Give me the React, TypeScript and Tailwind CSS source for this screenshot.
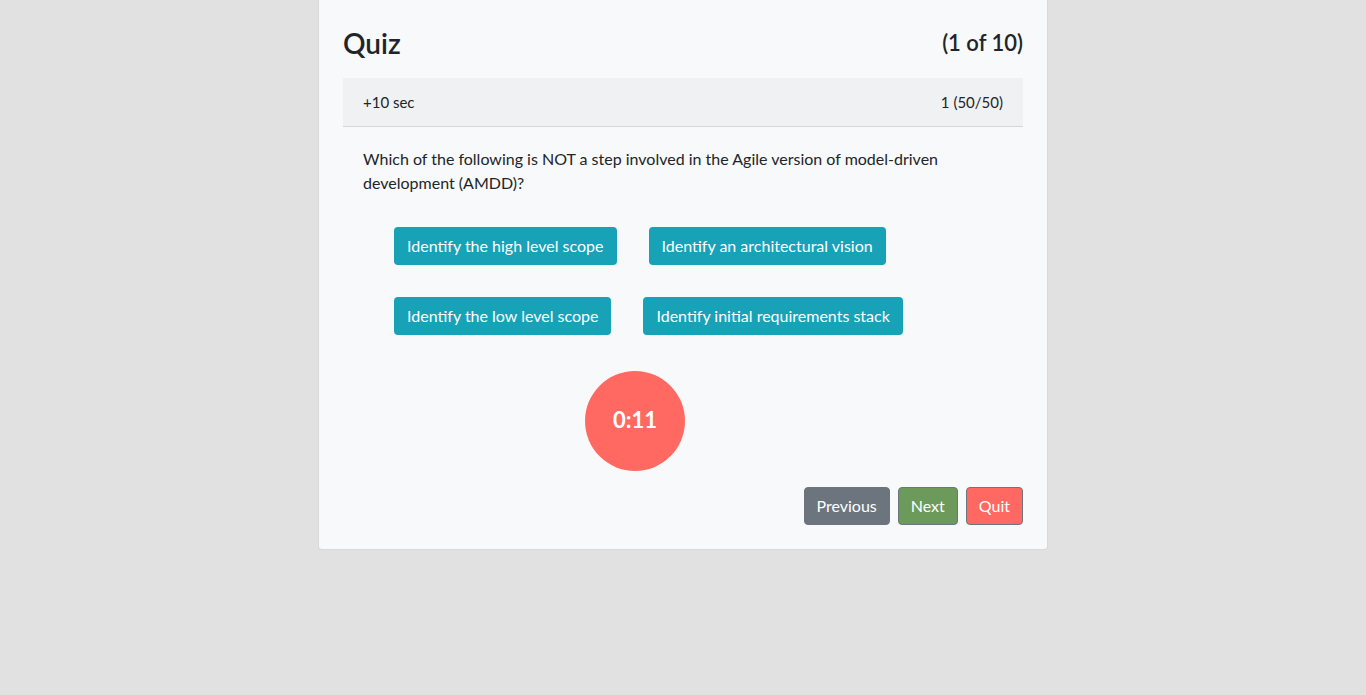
const answers = [
  ["Identify the high level scope", "Identify an architectural vision"],
  ["Identify the low level scope", "Identify initial requirements stack"],
];

export default function App() {
  return (
    <div className="min-h-screen bg-[#e1e1e1] font-['Segoe_UI',Lato,sans-serif] text-[#212529]">
      <div className="mx-auto w-[730px] bg-[#f8f9fa] border border-t-0 border-[#d9d9d9] rounded-b px-6 pt-6 pb-6">
        {/* Header */}
        <div className="flex items-center justify-between h-[38px]">
          <h1 className="text-[28px] font-semibold leading-none">Quiz</h1>
          <span className="text-[22px] font-semibold leading-none">(1 of 10)</span>
        </div>

        {/* Info bar */}
        <div className="mt-4 h-[49px] bg-[#f0f1f3] border-b border-[#d6d6d6] px-5 flex items-center justify-between text-[15px]">
          <span>+10 sec</span>
          <span>1 (50/50)</span>
        </div>

        {/* Question */}
        <div className="px-5 pt-5">
          <p className="text-base leading-6 w-[600px]">
            Which of the following is NOT a step involved in the Agile version of model-driven development (AMDD)?
          </p>
          <div className="ml-[31px] mt-[32px] flex flex-col gap-8">
            {answers.map((row, i) => (
              <div key={i} className="flex gap-8">
                {row.map((a) => (
                  <button
                    key={a}
                    className="h-[38px] px-[13px] rounded bg-[#17a2b8] text-white text-base leading-6"
                  >
                    {a}
                  </button>
                ))}
              </div>
            ))}
          </div>
          <div className="ml-[222px] mt-9 w-[100px] h-[100px] rounded-full bg-[#ff6961] flex items-center justify-center pb-1 text-white text-[22px] font-bold">
            0:11
          </div>
        </div>

        {/* Footer */}
        <div className="mt-4 flex justify-end gap-2">
          <button className="h-[38px] px-3 rounded bg-[#6c757d] border border-[#6c757d] text-white text-base">Previous</button>
          <button className="h-[38px] px-3 rounded bg-[#6b9a5b] border border-[#6c757d] text-white text-base">Next</button>
          <button className="h-[38px] px-3 rounded bg-[#ff6961] border border-[#6c757d] text-white text-base">Quit</button>
        </div>
      </div>
    </div>
  );
}
